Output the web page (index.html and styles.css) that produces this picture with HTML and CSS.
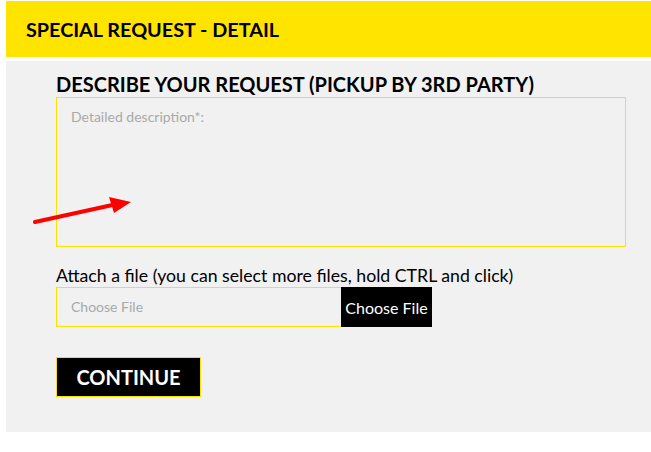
FILE: index.html
```html
<!DOCTYPE html>
<html>
<head>
<meta charset="utf-8">
<link rel="stylesheet" href="styles.css">
</head>
<body>
<div class="header">SPECIAL REQUEST - DETAIL</div>
<div class="panel">
  <h2 class="title">DESCRIBE YOUR REQUEST (PICKUP BY 3RD PARTY)</h2>
  <div class="textarea">Detailed description*:</div>
  <div class="label">Attach a file (you can select more files, hold CTRL and click)</div>
  <div class="filerow">
    <div class="fileinput">Choose File</div>
    <div class="filebtn">Choose File</div>
  </div>
  <div class="continue">CONTINUE</div>
</div>
<svg class="arrow" width="110" height="40" viewBox="0 0 110 40">
  <line x1="2" y1="36" x2="84" y2="18" stroke="#ff0000" stroke-width="4" stroke-linecap="round"/>
  <polygon points="76,11 98,16 81,27" fill="#ff0000"/>
</svg>
</body>
</html>
```
FILE: styles.css
```css
html, body {
  margin: 0;
  padding: 0;
  background: #ffffff;
  font-family: Lato, "Liberation Sans", sans-serif;
}
body {
  position: relative;
  width: 651px;
  height: 452px;
  overflow: hidden;
}
.header {
  margin: 1px 0 0 6px;
  height: 56px;
  background: #ffe400;
  padding-left: 20px;
  font-weight: 700;
  font-size: 19.8px;
  line-height: 56px;
  color: #000;
}
.panel {
  margin: 4px 0 0 6px;
  height: 371px;
  background: #f1f1f1;
  padding-left: 50px;
  box-sizing: border-box;
  display: flex;
  flex-direction: column;
  align-items: flex-start;
}
.title {
  margin: 0;
  padding-top: 11px;
  height: 25px;
  line-height: 25px;
  font-size: 20px;
  font-weight: 700;
  color: #000;
}
.textarea {
  margin-top: 0;
  width: 570px;
  height: 150px;
  box-sizing: border-box;
  border: 1px solid #ffe000;
  padding: 10px 14px;
  font-size: 14px;
  line-height: 18px;
  color: #a9a9a9;
}
.label {
  margin-top: 18px;
  height: 22px;
  line-height: 22px;
  font-size: 17.7px;
  color: #000;
}
.filerow {
  display: flex;
}
.fileinput {
  width: 285px;
  height: 40px;
  box-sizing: border-box;
  border: 1px solid #ffe000;
  border-right: none;
  padding-left: 14px;
  font-size: 14px;
  line-height: 38px;
  color: #a9a9a9;
}
.filebtn {
  width: 91px;
  height: 40px;
  background: #000;
  color: #fff;
  font-size: 16px;
  line-height: 42px;
  text-align: center;
}
.continue {
  margin-top: 30px;
  width: 145px;
  height: 40px;
  box-sizing: border-box;
  border: 1px solid #ffe000;
  background: #000;
  color: #fff;
  font-size: 20px;
  font-weight: 700;
  line-height: 38px;
  text-align: center;
}
.arrow {
  position: absolute;
  left: 33px;
  top: 186px;
}
```
